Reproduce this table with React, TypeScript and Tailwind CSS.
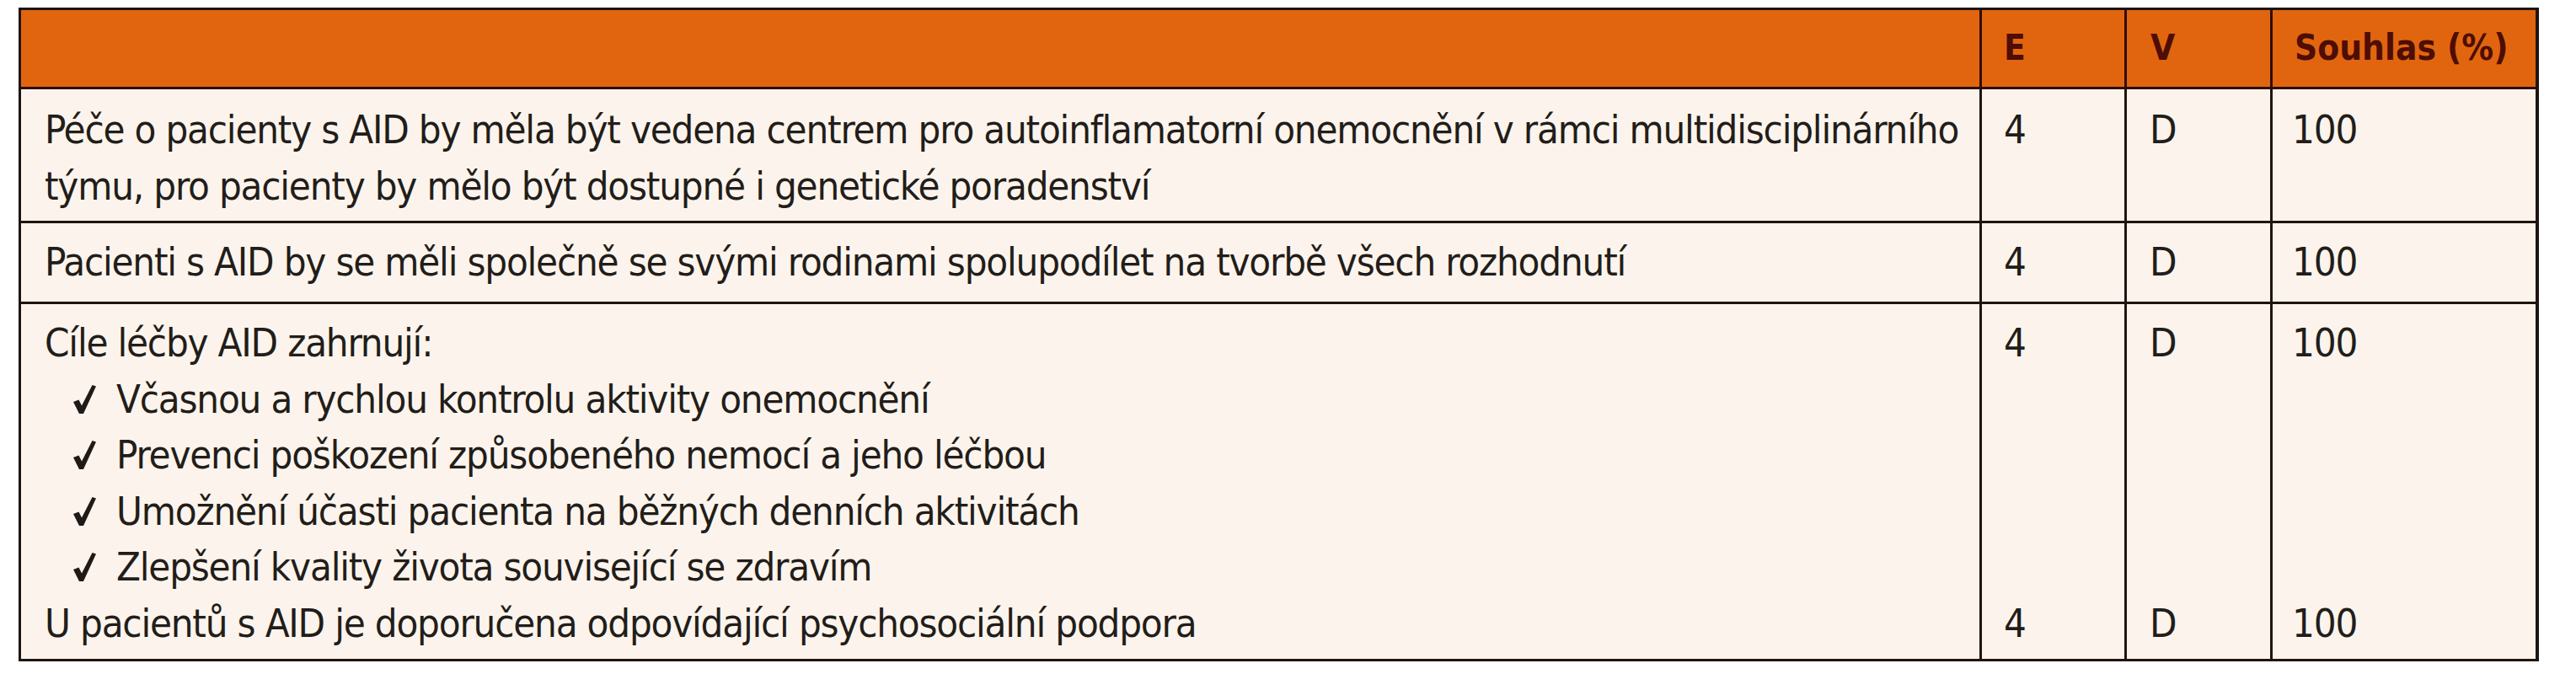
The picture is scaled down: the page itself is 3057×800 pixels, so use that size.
import React from "react";

const FONT = {
  fontFamily: '"DejaVu Sans Condensed", "DejaVu Sans", sans-serif',
};

function Check() {
  return (
    <svg
      width="27"
      height="34"
      viewBox="0 0 27 34"
      className="shrink-0"
      aria-hidden="true"
    >
      <path d="M0 20 L6.5 17.5 L10 24.5 L22.5 0 L27 1.5 L12 34 L7 34 Z" fill="#1f1a17" />
    </svg>
  );
}

function NumCells({ tall, pt }: { tall?: boolean; pt: string }) {
  const vals = ["4", "D", "100"];
  const pads = ["pl-[26px]", "pl-[27px]", "pl-[23px]"];
  return (
    <>
      {vals.map((v, i) => (
        <div key={i} className={`border-l-[3px] border-[#1e1511] ${pads[i]} ${pt}`}>
          {tall ? (
            <div className="flex h-[399px] flex-col justify-between">
              <div>{v}</div>
              <div>{v}</div>
            </div>
          ) : (
            <div>{v}</div>
          )}
        </div>
      ))}
    </>
  );
}

export default function App() {
  const items = [
    "Včasnou a rychlou kontrolu aktivity onemocnění",
    "Prevenci poškození způsobeného nemocí a jeho léčbou",
    "Umožnění účasti pacienta na běžných denních aktivitách",
    "Zlepšení kvality života související se zdravím",
  ];
  return (
    <div className="min-h-screen bg-white pl-[22px] pt-[9px]" style={FONT}>
      <div className="w-[2991px] border-b-[3px] border-l-[3px] border-r-[4px] border-t-[3px] border-[#1e1511] bg-[#fcf4ec] text-[47px] leading-[66.5px] tracking-[-1.2px] text-[#221d1a] whitespace-nowrap">
        {/* header */}
        <div className="grid h-[94px] grid-cols-[2324px_172px_173px_1fr] border-b-[3px] border-[#2e0d06] bg-[#e1650f] text-[42px] font-bold tracking-[0px] text-[#4e0d05]">
          <div />
          <div className="flex items-center border-l-[3px] border-[#2e0d06] pl-[26px]">E</div>
          <div className="flex items-center border-l-[3px] border-[#2e0d06] pl-[28px]">V</div>
          <div className="flex items-center border-l-[3px] border-[#2e0d06] pl-[26px]">Souhlas (%)</div>
        </div>

        {/* row 1 */}
        <div className="grid h-[159px] grid-cols-[2324px_172px_173px_1fr] border-b-[3px] border-[#1e1511]">
          <div className="pl-[28px] pt-[15px]">
            Péče o pacienty s AID by měla být vedena centrem pro autoinflamatorní onemocnění v rámci multidisciplinárního
            <br />
            týmu, pro pacienty by mělo být dostupné i genetické poradenství
          </div>
          <NumCells pt="pt-[15px]" />
        </div>

        {/* row 2 */}
        <div className="grid h-[96px] grid-cols-[2324px_172px_173px_1fr] border-b-[3px] border-[#1e1511]">
          <div className="pl-[28px] pt-[13px]">
            Pacienti s AID by se měli společně se svými rodinami spolupodílet na tvorbě všech rozhodnutí
          </div>
          <NumCells pt="pt-[13px]" />
        </div>

        {/* row 3 */}
        <div className="grid h-[421px] grid-cols-[2324px_172px_173px_1fr]">
          <div className="pl-[28px] pt-[13px]">
            <div>Cíle léčby AID zahrnují:</div>
            {items.map((t) => (
              <div key={t} className="flex items-center pl-[34px]">
                <Check />
                <span className="ml-[24px]">{t}</span>
              </div>
            ))}
            <div>U pacientů s AID je doporučena odpovídající psychosociální podpora</div>
          </div>
          <NumCells tall pt="pt-[13px]" />
        </div>
      </div>
    </div>
  );
}
